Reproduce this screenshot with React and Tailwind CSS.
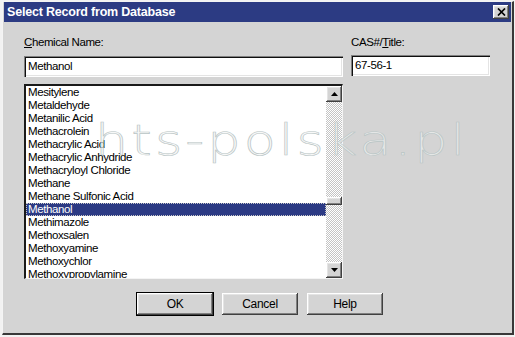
import React from "react";

const items = [
  "Mesitylene",
  "Metaldehyde",
  "Metanilic Acid",
  "Methacrolein",
  "Methacrylic Acid",
  "Methacrylic Anhydride",
  "Methacryloyl Chloride",
  "Methane",
  "Methane Sulfonic Acid",
  "Methanol",
  "Methimazole",
  "Methoxsalen",
  "Methoxyamine",
  "Methoxychlor",
  "Methoxypropylamine",
];

const font = "font-['Liberation_Sans',Arial,sans-serif]";
const raised =
  "shadow-[inset_-1px_-1px_#404040,inset_1px_1px_#ffffff,inset_-2px_-2px_#808080,inset_2px_2px_#e4e4e4]";
const sunken =
  "shadow-[inset_1px_1px_#808080,inset_2px_2px_#101010,inset_-1px_-1px_#ffffff,inset_-2px_-2px_#e4e4e4]";

function Arrow({ up }) {
  return (
    <svg width="7" height="4" viewBox="0 0 7 4">
      {up ? <path d="M3.5 0 L7 4 L0 4 Z" fill="#000" /> : <path d="M0 0 L7 0 L3.5 4 Z" fill="#000" />}
    </svg>
  );
}

function Btn({ children, def }) {
  return (
    <div
      className={`w-[76px] h-[22px] flex items-center justify-center bg-[#d4d4d4] text-[12px] tracking-[-0.3px] text-black ${raised} ${
        def ? "outline outline-1 outline-black" : ""
      }`}
    >
      {children}
    </div>
  );
}

export default function App() {
  return (
    <div className={`w-[515px] h-[337px] bg-[#f2f2f2] pl-[2px] pt-[1px] overflow-hidden ${font}`}>
      <div className="relative w-[512px] h-[334px] bg-[#d4d4d4] border-l border-t border-l-[#f4f4f4] border-t-[#f4f4f4] border-r-2 border-b-2 border-r-[#383838] border-b-[#383838] flex flex-col">
        {/* Title bar */}
        <div className="mx-[1px] h-[20px] bg-[#2c3b83] flex items-center justify-between pl-[3px] pr-[2px]">
          <span className="text-white font-bold text-[12.5px] tracking-[-0.2px] leading-none">
            Select Record from Database
          </span>
          <div className={`w-[16px] h-[14px] bg-[#d4d4d4] flex items-center justify-center ${raised}`}>
            <svg width="9" height="8" viewBox="0 0 9 8">
              <path d="M1 0.5 L8 7.5 M8 0.5 L1 7.5" stroke="#000" strokeWidth="1.7" />
            </svg>
          </div>
        </div>

        {/* Body */}
        <div className="flex pl-[21px] pt-[14px] gap-[8px]">
          <div className="w-[319px] flex flex-col">
            <div className="h-[13px] text-[11.5px] leading-[13px] tracking-[-0.4px] text-black">
              <span className="underline underline-offset-1">C</span>hemical Name:
            </div>
            <div className={`mt-[7px] h-[21px] bg-white flex items-center pl-[4px] text-[11.5px] tracking-[-0.4px] ${sunken}`}>
              Methanol
            </div>
            <div className="mt-[7px] h-[195px] bg-white border-t-2 border-l-2 border-t-[#1a1a1a] border-l-[#1a1a1a] border-r border-b border-r-[#f4f4f4] border-b-[#f4f4f4] flex">
              <div className="w-[300px] flex flex-col overflow-hidden">
                {items.map((it) => (
                  <div
                    key={it}
                    className={`h-[13px] shrink-0 leading-[13px] text-[11.5px] tracking-[-0.4px] pl-[2px] ${
                      it === "Methanol"
                        ? "bg-[#2c3a84] text-white outline outline-1 outline-dotted outline-[#c8c8c8] -outline-offset-1"
                        : "text-black"
                    }`}
                  >
                    {it}
                  </div>
                ))}
              </div>
              <div className="w-[16px] flex flex-col bg-[repeating-conic-gradient(#c4c4c4_0_25%,#ffffff_0_50%)] bg-[length:2px_2px]">
                <div className={`h-[16px] bg-[#d4d4d4] flex items-center justify-center ${raised}`}>
                  <Arrow up />
                </div>
                <div className="h-[95px]" />
                <div className={`h-[8px] bg-[#d4d4d4] ${raised}`} />
                <div className="flex-1" />
                <div className={`h-[16px] bg-[#d4d4d4] flex items-center justify-center ${raised}`}>
                  <Arrow />
                </div>
              </div>
            </div>
          </div>
          <div className="w-[139px] flex flex-col">
            <div className="h-[13px] text-[11.5px] leading-[13px] tracking-[-0.4px] text-black">
              CAS#/<span className="underline underline-offset-1">T</span>itle:
            </div>
            <div className={`mt-[6px] h-[21px] bg-white flex items-center pl-[4px] text-[11.5px] tracking-[-0.4px] ${sunken}`}>
              67-56-1
            </div>
          </div>
        </div>

        {/* Buttons */}
        <div className="flex pl-[134px] pt-[14px] gap-[9px]">
          <Btn def>OK</Btn>
          <Btn>Cancel</Btn>
          <Btn>Help</Btn>
        </div>

        {/* Watermark */}
        <div className="absolute left-[92px] top-[117px] pointer-events-none text-[43px] leading-none font-['DejaVu_Sans',sans-serif] font-extralight tracking-[2.5px] text-[#f2f4f4]/60 [-webkit-text-stroke:0.6px_#b8c4c4] scale-x-[1.22] origin-left">
          hts-polska.pl
        </div>
      </div>
    </div>
  );
}
